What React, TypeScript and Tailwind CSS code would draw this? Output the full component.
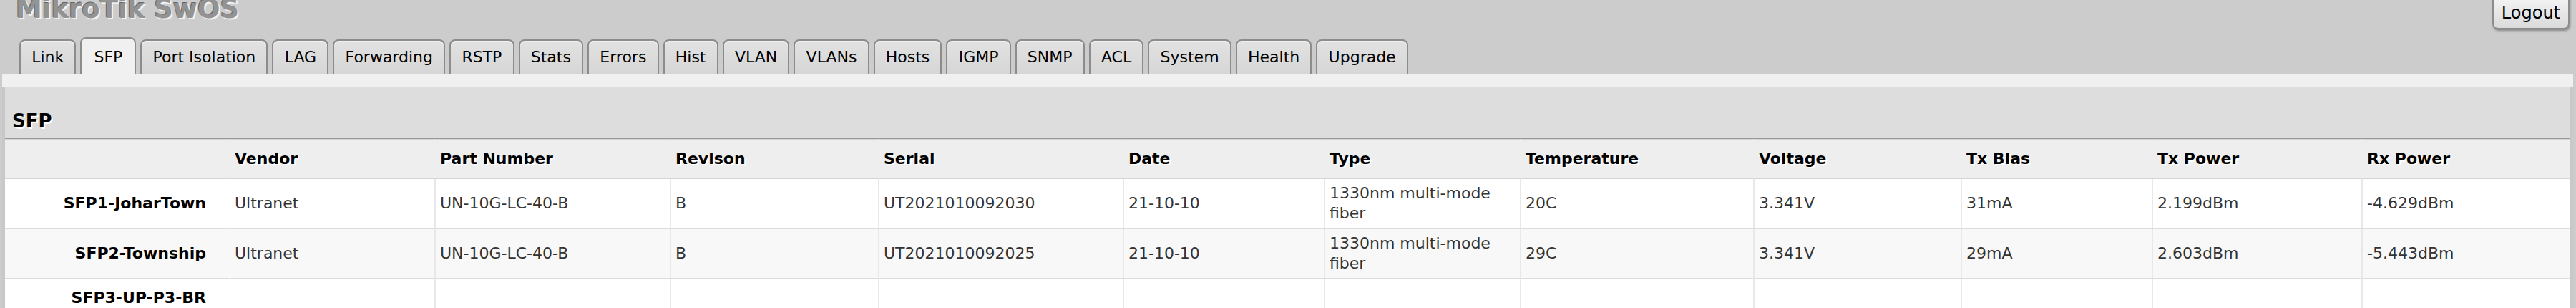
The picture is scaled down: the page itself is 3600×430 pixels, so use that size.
const tabs = [
  "Link",
  "SFP",
  "Port Isolation",
  "LAG",
  "Forwarding",
  "RSTP",
  "Stats",
  "Errors",
  "Hist",
  "VLAN",
  "VLANs",
  "Hosts",
  "IGMP",
  "SNMP",
  "ACL",
  "System",
  "Health",
  "Upgrade",
];

const columns = [
  "Vendor",
  "Part Number",
  "Revison",
  "Serial",
  "Date",
  "Type",
  "Temperature",
  "Voltage",
  "Tx Bias",
  "Tx Power",
  "Rx Power",
];

// column widths, label column first
const colWidths = [
  "w-[313px]",
  "w-[287px]",
  "w-[329px]",
  "w-[291px]",
  "w-[342px]",
  "w-[281px]",
  "w-[274px]",
  "w-[326px]",
  "w-[290px]",
  "w-[267px]",
  "w-[293px]",
  "w-[291px]",
];

const ports = [
  {
    name: "SFP1-JoharTown",
    values: [
      "Ultranet",
      "UN-10G-LC-40-B",
      "B",
      "UT2021010092030",
      "21-10-10",
      "1330nm multi-mode fiber",
      "20C",
      "3.341V",
      "31mA",
      "2.199dBm",
      "-4.629dBm",
    ],
  },
  {
    name: "SFP2-Township",
    values: [
      "Ultranet",
      "UN-10G-LC-40-B",
      "B",
      "UT2021010092025",
      "21-10-10",
      "1330nm multi-mode fiber",
      "29C",
      "3.341V",
      "29mA",
      "2.603dBm",
      "-5.443dBm",
    ],
  },
  {
    name: "SFP3-UP-P3-BR",
    values: ["", "", "", "", "", "", "", "", "", "", ""],
  },
];

function Tab({ label, active }: { label: string; active: boolean }) {
  return (
    <div
      className={
        active
          ? "flex h-[51px] items-center rounded-t-[8px] border-2 border-b-0 border-[#8c8c8c] bg-[#f0f0f0] px-[17px] pt-[3px] text-black"
          : "flex h-[48px] items-center rounded-t-[8px] border-2 border-b-0 border-[#8c8c8c] bg-gradient-to-b from-[#e2e2e2] to-[#d6d6d6] px-[15.2px] text-black shadow-[inset_0_2px_0_#f0f0f0]"
      }
    >
      <span className="leading-[28px]">{label}</span>
    </div>
  );
}

export default function App() {
  return (
    <div className="min-h-screen overflow-hidden bg-[#cccccc] font-['DejaVu_Sans',sans-serif] text-[22px]">
      {/* Title + Logout */}
      <div className="flex h-[52px] items-start justify-between">
        <div className="-mt-[6px] ml-[22px] text-[37px] font-bold leading-none text-[#939393] [text-shadow:-1px_-1px_0_#666,2px_2px_0_#f2f2f2]">
          MikroTik SwOS
        </div>
        <button className="mr-[9px] -mt-[5px] h-[46px] rounded-b-[8px] border-2 border-[#8c8c8c] bg-gradient-to-b from-[#f4f4f4] to-[#dadada] px-[11px] text-[24px] leading-[28px] text-black shadow-[1px_2px_3px_rgba(0,0,0,0.35)]">
          Logout
        </button>
      </div>

      {/* Tabs */}
      <div className="flex h-[51px] items-end gap-[6px] pl-[27px]">
        {tabs.map((t) => (
          <Tab key={t} label={t} active={t === "SFP"} />
        ))}
      </div>

      {/* Panel */}
      <div className="ml-[3px] mr-[4px] bg-[#f0f0f0] pt-[18px]">
        <div className="border-l-4 border-r-[5px] border-[#c8c8c8] bg-white">
          <div className="h-[73px] border-b-2 border-[#999999] bg-[#dddddd] pl-[10px] pt-[33px]">
            <h2 className="text-[26px] font-bold leading-[30px] text-black [text-shadow:2px_2px_0_#ffffff]">
              SFP
            </h2>
          </div>

          <table className="w-full table-fixed border-separate border-spacing-0">
            <colgroup>
              {colWidths.map((w, i) => (
                <col key={i} className={w} />
              ))}
            </colgroup>
            <thead>
              <tr className="bg-[#eeeeee]">
                <th className="border-t border-b-2 border-[#d4d4d4] pt-[13px] pb-[12px]" />
                {columns.map((c) => (
                  <th
                    key={c}
                    className="border-t border-b-2 border-l-2 border-t-[#d4d4d4] border-b-[#d4d4d4] border-l-transparent pt-[13px] pb-[12px] pl-[6px] text-left font-bold leading-[28px] text-black [text-shadow:2px_2px_1px_#ffffff]"
                  >
                    {c}
                  </th>
                ))}
              </tr>
            </thead>
            <tbody>
              {ports.map((p, r) => (
                <tr key={p.name} className={r % 2 === 1 ? "bg-[#f8f8f8]" : "bg-white"}>
                  <td
                    className={
                      "border-b-2 border-[#dcdcdc] pr-[32px] text-right align-middle font-bold leading-[28px] text-black " +
                      (p.values[0] ? "py-[6px]" : "h-[54px] py-[6px]")
                    }
                  >
                    {p.name}
                  </td>
                  {p.values.map((v, i) => (
                    <td
                      key={i}
                      className={
                        i === 0
                          ? "border-b-2 border-l-2 border-b-[#dcdcdc] border-l-transparent py-[6px] pl-[6px] align-middle leading-[28px] text-[#333333]"
                          : "border-b-2 border-l-2 border-b-[#dcdcdc] border-l-[#e8e8e8] py-[6px] pl-[6px] pr-[4px] align-middle leading-[28px] text-[#333333]"
                      }
                    >
                      {v}
                    </td>
                  ))}
                </tr>
              ))}
            </tbody>
          </table>
        </div>
      </div>
    </div>
  );
}
